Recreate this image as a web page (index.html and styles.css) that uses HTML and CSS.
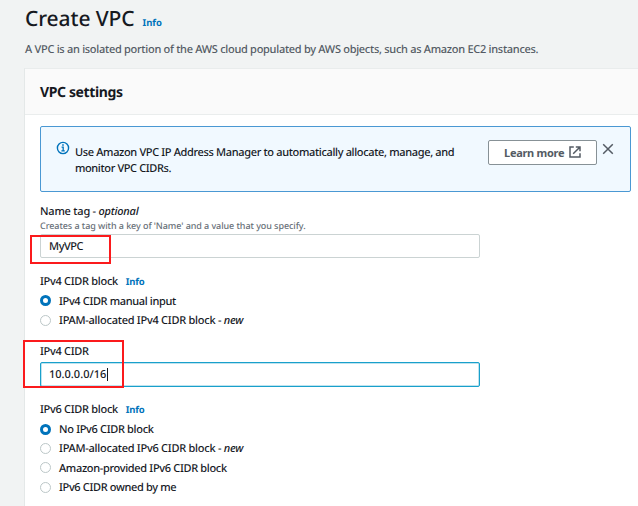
FILE: index.html
```html
<!DOCTYPE html>
<html lang="en">
<head>
<meta charset="utf-8">
<title>Create VPC</title>
<link rel="stylesheet" href="styles.css">
</head>
<body>
<main class="page">
  <header class="page-header">
    <div class="title-row"><h1>Create VPC</h1><a class="info">Info</a></div>
    <p class="description">A VPC is an isolated portion of the AWS cloud populated by AWS objects, such as Amazon EC2 instances.</p>
  </header>
  <section class="card">
    <div class="card-header"><h2>VPC settings</h2></div>
    <div class="card-body">
      <div class="alert">
        <svg class="alert-icon" width="14" height="14" viewBox="0 0 14 14" fill="none" stroke="#0073bb"><circle cx="7" cy="7" r="5.6" stroke-width="1.4"/><path d="M5.6 6.2H7.2V9.7M5.4 9.8H8.8" stroke-width="1.3"/><path d="M6.2 4.1H7.8" stroke-width="1.5"/></svg>
        <p class="alert-text"><span class="alert-first">Use Amazon VPC IP Address Manager to automatically allocate, manage, and</span><br><span class="alert-second">monitor VPC CIDRs.</span></p>
        <button class="learn"><span>Learn more</span><svg width="12" height="12" viewBox="0 0 12 12" fill="none" stroke="#545b64" stroke-width="1.5"><path d="M4.8 1H1V11H11V7.2M6.8 1H11V5.2M11 1L4.2 7.8"/></svg></button>
        <svg class="close" width="12" height="12" viewBox="0 0 12 12" fill="none" stroke="#545b64" stroke-width="1.5"><path d="M1.2 1.2L10.8 10.8M10.8 1.2L1.2 10.8"/></svg>
      </div>
      <div class="field name-field">
        <div class="label"><span class="t-name">Name tag - <em>optional</em></span></div>
        <div class="hint">Creates a tag with a key of 'Name' and a value that you specify.</div>
        <div class="input"><span class="t-value">MyVPC</span><i class="mark mark-name"></i></div>
      </div>
      <div class="field v4-field">
        <div class="label"><span class="t-block">IPv4 CIDR block</span><a class="info">Info</a></div>
        <div class="radio"><i class="dot on"></i><span class="t-manual">IPv4 CIDR manual input</span></div>
        <div class="radio"><i class="dot"></i><span class="t-ipam">IPAM-allocated IPv4 CIDR block - <em>new</em></span></div>
      </div>
      <div class="field cidr-field">
        <div class="label"><span class="t-cidr">IPv4 CIDR</span></div>
        <div class="input focused"><span class="t-ip">10.0.0.0/16</span><i class="caret"></i><i class="mark mark-cidr"></i></div>
      </div>
      <div class="field v6-field">
        <div class="label"><span class="t-block">IPv6 CIDR block</span><a class="info">Info</a></div>
        <div class="radio"><i class="dot on"></i><span class="t-none">No IPv6 CIDR block</span></div>
        <div class="radio"><i class="dot"></i><span class="t-ipam">IPAM-allocated IPv6 CIDR block - <em>new</em></span></div>
        <div class="radio"><i class="dot"></i><span class="t-amazon">Amazon-provided IPv6 CIDR block</span></div>
        <div class="radio"><i class="dot"></i><span class="t-owned">IPv6 CIDR owned by me</span></div>
      </div>
    </div>
  </section>
</main>
</body>
</html>
```
FILE: styles.css
```css
* { box-sizing: border-box; }
body { margin: 0; background: #f1f3f3; color: #16191f; font: 500 11px/16px "Noto Sans", "Open Sans", sans-serif; text-rendering: geometricPrecision; }
h1, h2, p { margin: 0; }
.page { height: 506px; overflow: hidden; padding-left: 24px; white-space: nowrap; }
.page-header { height: 68px; padding: 4px 0 0 1px; }
.title-row { display: flex; align-items: baseline; height: 30px; line-height: 30px; gap: 8px; }
h1 { font-size: 21px; font-weight: 500; line-height: 30px; letter-spacing: -0.1px; }
.info { color: #0073bb; font-size: 9.5px; font-weight: 700; letter-spacing: -0.2px; }
.title-row .info { letter-spacing: 0; }
.description { margin-top: 8px; color: #545b64; font-size: 11px; letter-spacing: -0.29px; }
.card { height: 460px; background: #fff; border-left: 1px solid #e4e8e8; border-top: 1px solid #e9ecec; }
.card-header { height: 46px; padding: 12px 0 0 15px; background: #fafafa; border-bottom: 1px solid #eaeded; }
h2 { font-size: 14px; line-height: 24px; font-weight: 700; letter-spacing: -0.38px; }
.card-body { padding: 11px 7px 0 15px; }
.alert { display: flex; align-items: flex-start; height: 66px; border: 1px solid #4a98d3; border-radius: 2px; background: #f1f9ff; padding: 13px 16px 0 15px; }
.alert-icon { margin-top: 1px; }
.alert-text { margin: 5px 0 0 5px; line-height: 16px; width: 414px; }
.alert-first { letter-spacing: -0.35px; }
.alert-second { letter-spacing: -0.38px; }
.learn { display: flex; align-items: center; justify-content: center; gap: 5px; width: 109px; height: 25px; padding: 0; border: 1px solid #879196; border-radius: 2px; background: #fff; color: #545b64; font: 700 11px "Noto Sans", "Open Sans", sans-serif; letter-spacing: -0.3px; }
.learn svg { margin-bottom: 2px; }
.close { margin: 3px 0 0 5px; }
.field { display: flex; flex-direction: column; }
.name-field { margin-top: 11px; }
.label { height: 16px; display: flex; align-items: center; gap: 8px; }
.label > *, .radio span, .input span { padding-top: 2px; }
.hint { height: 15px; line-height: 13px; font-size: 9px; color: #687078; letter-spacing: -0.07px; }
.input { position: relative; display: flex; align-items: center; width: 439.5px; height: 24px; padding-left: 8px; border: 1px solid #cbd3d3; border-radius: 2px; background: #fff; }
.input.focused { height: 25px; margin-top: 3px; border: 1px solid #19a0cb; box-shadow: inset 0 0 0 0.5px #7cc7df; }
.caret { width: 1px; height: 13px; margin-left: 1px; background: #16191f; }
.mark { position: absolute; border: 2px solid #fb1a1c; }
.mark-name { left: -11px; top: 0; width: 81px; height: 29px; }
.mark-cidr { left: -18px; top: -23px; width: 101px; height: 48px; }
.v4-field { margin-top: 15px; }
.v4-field .label, .v6-field .label { margin-bottom: 2px; }
.radio { display: flex; align-items: center; height: 19.4px; gap: 8px; }
.dot { width: 11px; height: 11px; border: 1px solid #bcc7c8; border-radius: 50%; background: #fff; }
.dot.on { border: 3.5px solid #0073bb; }
.cidr-field { margin-top: 13px; }
.v6-field { margin-top: 14.6px; }
.t-name { letter-spacing: -0.22px; }
.t-value { letter-spacing: -0.45px; }
.t-block, .t-cidr { letter-spacing: -0.3px; }
.t-manual { letter-spacing: -0.36px; }
.t-ipam { letter-spacing: -0.26px; }
.t-none, .t-amazon { letter-spacing: -0.33px; }
.t-owned { letter-spacing: -0.35px; }
```
